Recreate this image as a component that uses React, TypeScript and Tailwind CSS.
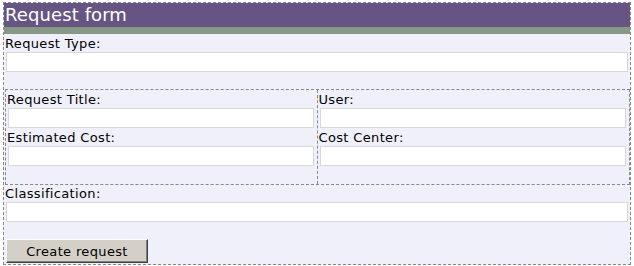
export default function App() {
  return (
    <div className="pl-[3px] pt-[2px]">
      <div className="box-border h-[263px] w-[628px] border border-dashed border-[#888888] bg-[#f0f0fa] font-['DejaVu_Sans',Verdana,sans-serif] text-[13px] leading-[16px] tracking-[0.35px] text-black">
        <div className="box-border h-[31px] border-b-[7px] border-[#879886] bg-[#665582] pl-[1px] text-[18px] leading-[24px] tracking-[0.1px] text-white">
          Request form
        </div>

        <div className="pt-[2px]">
          <div className="pl-[1px]">Request Type:</div>
          <input className="mx-[2px] box-border block h-[20px] w-[622px] border border-[#d8d8d8] bg-white outline-none" />
        </div>

        <div className="ml-[1px] mt-[17px] box-border grid h-[96px] w-[625px] grid-cols-2 border border-dashed border-[#888888]">
          <div className="border-r border-dashed border-[#888888] pt-[2px]">
            <div className="pl-[1px]">Request Title:</div>
            <input className="ml-[2px] box-border block h-[20px] w-[306px] border border-[#d8d8d8] bg-white outline-none" />
            <div className="mt-[2px] pl-[1px]">Estimated Cost:</div>
            <input className="ml-[2px] box-border block h-[20px] w-[306px] border border-[#d8d8d8] bg-white outline-none" />
          </div>
          <div className="pt-[2px]">
            <div className="pl-[1px]">User:</div>
            <input className="ml-[2px] box-border block h-[20px] w-[306px] border border-[#d8d8d8] bg-white outline-none" />
            <div className="mt-[2px] pl-[1px]">Cost Center:</div>
            <input className="ml-[2px] box-border block h-[20px] w-[306px] border border-[#d8d8d8] bg-white outline-none" />
          </div>
        </div>

        <div className="pt-[1px]">
          <div className="pl-[1px]">Classification:</div>
          <input className="mx-[2px] box-border block h-[20px] w-[622px] border border-[#d8d8d8] bg-white outline-none" />
        </div>

        <button className="ml-[2px] mt-[17px] box-border block h-[24px] w-[142px] border border-b-[#404040] border-l-white border-r-[#404040] border-t-white bg-[#d4d0c8] text-[13px] leading-[15px] tracking-[0.35px] text-black shadow-[inset_-1px_-1px_0_#808080]">
          Create request
        </button>
      </div>
    </div>
  );
}
